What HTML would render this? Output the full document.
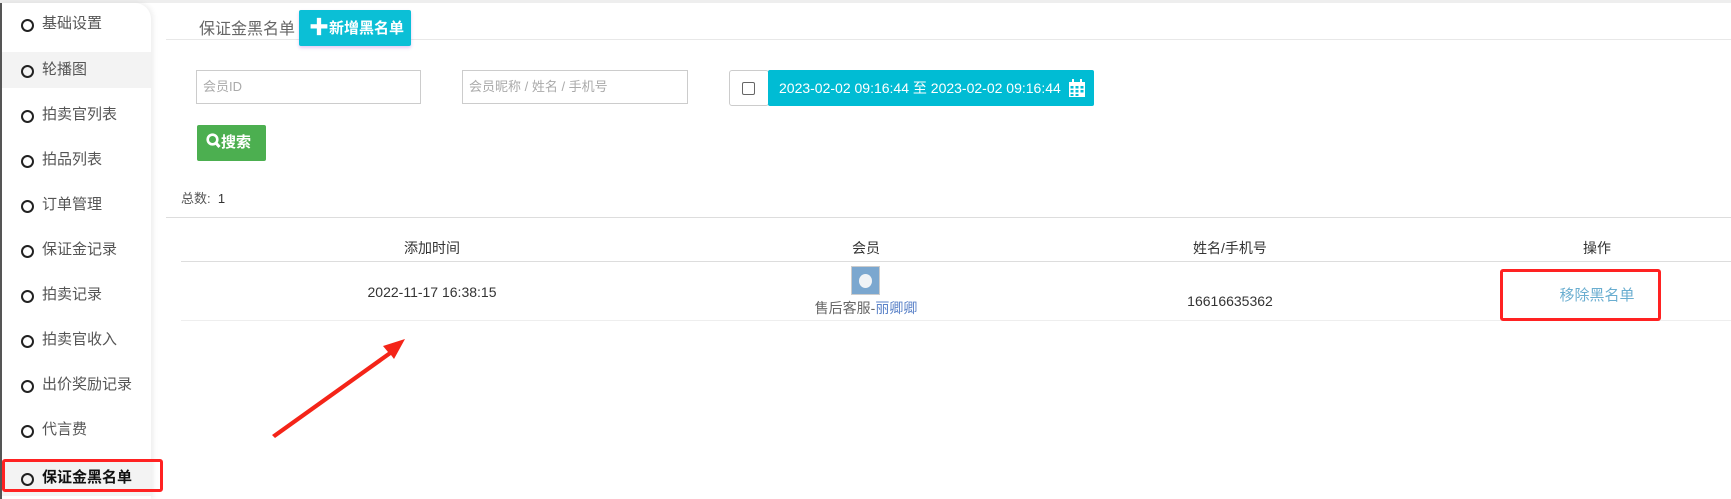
<!DOCTYPE html>
<html><head><meta charset="utf-8"><style>
*{margin:0;padding:0;box-sizing:border-box}
body{width:1731px;height:499px;overflow:hidden;background:#fff;font-family:"Liberation Sans","Noto Sans CJK SC",sans-serif;color:#333;position:relative;font-size:14px}
.abs{position:absolute}
.topbar{left:0;top:0;width:1731px;height:3px;background:#eee}
.side{left:0;top:3px;width:151px;height:496px;background:#fff;border-left:2px solid #555;box-shadow:2px 0 6px rgba(0,0,0,.08);border-top-right-radius:16px}
.item{position:absolute;left:0;width:149px;height:36px;line-height:36px;padding-left:40px;font-size:15px;color:#555}
.item:before{content:"";position:absolute;left:19px;top:13px;width:9px;height:9px;border:2px solid #222;border-radius:50%}
.act{background:#f3f3f3}
.red{border:3px solid #f22;border-radius:3px}
.inp{height:34px;border:1px solid #ccc;font-size:13px;color:#aaa;line-height:32px;padding-left:6px}
</style></head><body>
<div class="abs topbar"></div>
<div class="abs side">
<div class="item" style="top:3px">基础设置</div>
<div class="item act" style="top:49px">轮播图</div>
<div class="item" style="top:94px">拍卖官列表</div>
<div class="item" style="top:139px">拍品列表</div>
<div class="item" style="top:184px">订单管理</div>
<div class="item" style="top:229px">保证金记录</div>
<div class="item" style="top:274px">拍卖记录</div>
<div class="item" style="top:319px">拍卖官收入</div>
<div class="item" style="top:364px">出价奖励记录</div>
<div class="item" style="top:409px">代言费</div>
<div class="item act" style="top:457px;font-weight:bold;color:#111">保证金黑名单</div>
</div>
<div class="abs red" style="left:2px;top:459px;width:161px;height:33px"></div>

<div class="abs" style="left:166px;top:39px;width:1565px;height:1px;background:#e8e8e8"></div>
<div class="abs" style="left:199px;top:15px;font-size:16px;color:#666">保证金黑名单</div>
<div class="abs" style="left:299px;top:10px;width:112px;height:36px;background:#0bbfd6;color:#fff;font-weight:bold;font-size:15px;line-height:36px;padding-left:10px;border-radius:2px;box-shadow:0 2px 3px rgba(160,80,220,.3)"><span style="font-size:20px;vertical-align:-1px">✚</span>新增黑名单</div>

<div class="abs inp" style="left:196px;top:70px;width:225px">会员ID</div>
<div class="abs inp" style="left:462px;top:70px;width:226px">会员昵称 / 姓名 / 手机号</div>
<div class="abs" style="left:729px;top:70px;width:40px;height:36px;border:1px solid #ccc;border-radius:3px"><div style="position:absolute;left:12px;top:11px;width:13px;height:13px;border:1px solid #666;border-radius:2px"></div></div>
<div class="abs" style="left:768px;top:70px;width:326px;height:36px;background:#00bcd4;color:#fff;font-size:14px;line-height:36px;padding-left:11px;border-radius:2px;white-space:nowrap">2023-02-02 09:16:44 至 2023-02-02 09:16:44
<svg style="position:absolute;right:8px;top:9px" width="18" height="19" viewBox="0 0 18 19"><rect x="1" y="3" width="16" height="15" fill="#fff"/><rect x="4" y="0" width="2" height="4" fill="#fff"/><rect x="12" y="0" width="2" height="4" fill="#fff"/><g fill="#00bcd4"><rect x="2.5" y="7" width="3" height="2.5"/><rect x="7.5" y="7" width="3" height="2.5"/><rect x="12.5" y="7" width="3" height="2.5"/><rect x="2.5" y="11" width="3" height="2.5"/><rect x="7.5" y="11" width="3" height="2.5"/><rect x="12.5" y="11" width="3" height="2.5"/><rect x="2.5" y="15" width="3" height="2"/><rect x="7.5" y="15" width="3" height="2"/></g></svg></div>

<div class="abs" style="left:197px;top:125px;width:69px;height:36px;background:#4caf50;color:#fff;font-weight:bold;font-size:15px;line-height:36px;padding-left:9px;border-radius:2px"><svg width="15" height="16" viewBox="0 0 15 16" style="vertical-align:-2px"><circle cx="6.5" cy="6.5" r="4.8" fill="none" stroke="#fff" stroke-width="2.6"/><path d="M10 10l3.5 4" stroke="#fff" stroke-width="3"/></svg>搜索</div>

<div class="abs" style="left:181px;top:188px;font-size:13px;color:#555">总数: &nbsp;<span style="color:#333">1</span></div>
<div class="abs" style="left:166px;top:217px;width:1565px;height:1px;background:#ddd"></div>
<div class="abs" style="left:181px;top:261px;width:1550px;height:1px;background:#ddd"></div>
<div class="abs" style="left:181px;top:320px;width:1550px;height:1px;background:#eee"></div>

<div class="abs" style="left:382px;top:238px;width:100px;text-align:center">添加时间</div>
<div class="abs" style="left:816px;top:238px;width:100px;text-align:center">会员</div>
<div class="abs" style="left:1170px;top:238px;width:120px;text-align:center">姓名/手机号</div>
<div class="abs" style="left:1547px;top:238px;width:100px;text-align:center">操作</div>

<div class="abs" style="left:352px;top:284px;width:160px;text-align:center">2022-11-17 16:38:15</div>
<div class="abs" style="left:851px;top:266px;width:29px;height:29px;border:1px solid #ccc;background:#7ba7cf;padding:2px"><div style="width:13px;height:14px;background:#f0f3f6;border-radius:50%;margin:5px auto 0"></div></div>
<div class="abs" style="left:786px;top:298px;width:160px;text-align:center;color:#666">售后客服-<span style="color:#5a82c8">丽卿卿</span></div>
<div class="abs" style="left:1170px;top:293px;width:120px;text-align:center">16616635362</div>
<div class="abs" style="left:1547px;top:284px;width:100px;text-align:center;color:#6aaed0;font-size:15px">移除黑名单</div>
<div class="abs red" style="left:1500px;top:269px;width:161px;height:52px"></div>

<svg class="abs" style="left:0;top:0" width="1731" height="499"><polygon points="272,435 388,352 383,346 405,339 394,359 391,355 275,438" fill="#f42418"/></svg>
</body></html>
